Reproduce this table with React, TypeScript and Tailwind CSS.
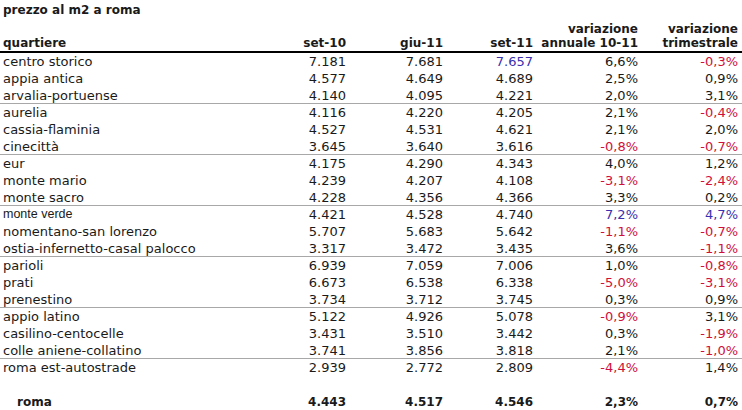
import React from 'react';

type Row = {
  name: string;
  s10: string;
  g11: string;
  s11: string;
  ann: string;
  tri: string;
  sep?: boolean;
  alt?: boolean;
  blueS11?: boolean;
};

const rows: Row[] = [
  { name: 'centro storico', s10: '7.181', g11: '7.681', s11: '7.657', ann: '6,6%', tri: '-0,3%', blueS11: true },
  { name: 'appia antica', s10: '4.577', g11: '4.649', s11: '4.689', ann: '2,5%', tri: '0,9%' },
  { name: 'arvalia-portuense', s10: '4.140', g11: '4.095', s11: '4.221', ann: '2,0%', tri: '3,1%', sep: true },
  { name: 'aurelia', s10: '4.116', g11: '4.220', s11: '4.205', ann: '2,1%', tri: '-0,4%' },
  { name: 'cassia-flaminia', s10: '4.527', g11: '4.531', s11: '4.621', ann: '2,1%', tri: '2,0%' },
  { name: 'cinecittà', s10: '3.645', g11: '3.640', s11: '3.616', ann: '-0,8%', tri: '-0,7%', sep: true },
  { name: 'eur', s10: '4.175', g11: '4.290', s11: '4.343', ann: '4,0%', tri: '1,2%' },
  { name: 'monte mario', s10: '4.239', g11: '4.207', s11: '4.108', ann: '-3,1%', tri: '-2,4%' },
  { name: 'monte sacro', s10: '4.228', g11: '4.356', s11: '4.366', ann: '3,3%', tri: '0,2%', sep: true },
  { name: 'monte verde', s10: '4.421', g11: '4.528', s11: '4.740', ann: '7,2%', tri: '4,7%', alt: true },
  { name: 'nomentano-san lorenzo', s10: '5.707', g11: '5.683', s11: '5.642', ann: '-1,1%', tri: '-0,7%' },
  { name: 'ostia-infernetto-casal palocco', s10: '3.317', g11: '3.472', s11: '3.435', ann: '3,6%', tri: '-1,1%', sep: true },
  { name: 'parioli', s10: '6.939', g11: '7.059', s11: '7.006', ann: '1,0%', tri: '-0,8%' },
  { name: 'prati', s10: '6.673', g11: '6.538', s11: '6.338', ann: '-5,0%', tri: '-3,1%' },
  { name: 'prenestino', s10: '3.734', g11: '3.712', s11: '3.745', ann: '0,3%', tri: '0,9%', sep: true },
  { name: 'appio latino', s10: '5.122', g11: '4.926', s11: '5.078', ann: '-0,9%', tri: '3,1%' },
  { name: 'casilino-centocelle', s10: '3.431', g11: '3.510', s11: '3.442', ann: '0,3%', tri: '-1,9%' },
  { name: 'colle aniene-collatino', s10: '3.741', g11: '3.856', s11: '3.818', ann: '2,1%', tri: '-1,0%', sep: true },
  { name: 'roma est-autostrade', s10: '2.939', g11: '2.772', s11: '2.809', ann: '-4,4%', tri: '1,4%' },
];

const grid = 'grid grid-cols-[250px_96px_97px_90px_105px_104px]';

// negatives in red, the top values of monte verde in blue
const pctColor = (v: string, blue?: boolean) =>
  blue ? 'text-[#3a2fae]' : v.startsWith('-') ? 'text-[#d0103a]' : '';

export default function App() {
  return (
    <div className="w-[742px] h-[410px] bg-white text-[#1a1a1a] font-['DejaVu_Sans',Verdana,sans-serif] overflow-hidden">
      <div className="h-[20px] pl-[3px] pt-[2px] text-[12px] font-bold leading-[16px]">prezzo al m2 a roma</div>

      {/* header */}
      <div className={`${grid} h-[33px] border-b-2 border-black items-end pb-[1px] text-[12px] font-bold leading-[14px]`}>
        <div className="pl-[3px]">quartiere</div>
        <div className="text-right">set-10</div>
        <div className="text-right">giu-11</div>
        <div className="text-right">set-11</div>
        <div className="text-right">variazione<br />annuale 10-11</div>
        <div className="text-right pr-[4px]">variazione<br />trimestrale</div>
      </div>

      {rows.map((r) => (
        <div
          key={r.name}
          className={`${grid} h-[17px] items-center text-[13px] leading-[17px] ${r.sep ? 'border-b border-[#a8a8a8]' : ''}`}
        >
          <div className={`pl-[3px] whitespace-nowrap ${r.alt ? "font-['Liberation_Sans',Arial,sans-serif] text-[12.5px]" : ''}`}>
            {r.name}
          </div>
          <div className="text-right">{r.s10}</div>
          <div className="text-right">{r.g11}</div>
          <div className={`text-right ${r.blueS11 ? 'text-[#3a2fae]' : ''}`}>{r.s11}</div>
          <div className={`text-right ${pctColor(r.ann, r.alt)}`}>{r.ann}</div>
          <div className={`text-right pr-[4px] ${pctColor(r.tri, r.alt)}`}>{r.tri}</div>
        </div>
      ))}

      {/* total */}
      <div className={`${grid} mt-[18px] h-[17px] items-center text-[12px] font-bold leading-[17px]`}>
        <div className="pl-[17px]">roma</div>
        <div className="text-right">4.443</div>
        <div className="text-right">4.517</div>
        <div className="text-right">4.546</div>
        <div className="text-right">2,3%</div>
        <div className="text-right pr-[4px]">0,7%</div>
      </div>
    </div>
  );
}
